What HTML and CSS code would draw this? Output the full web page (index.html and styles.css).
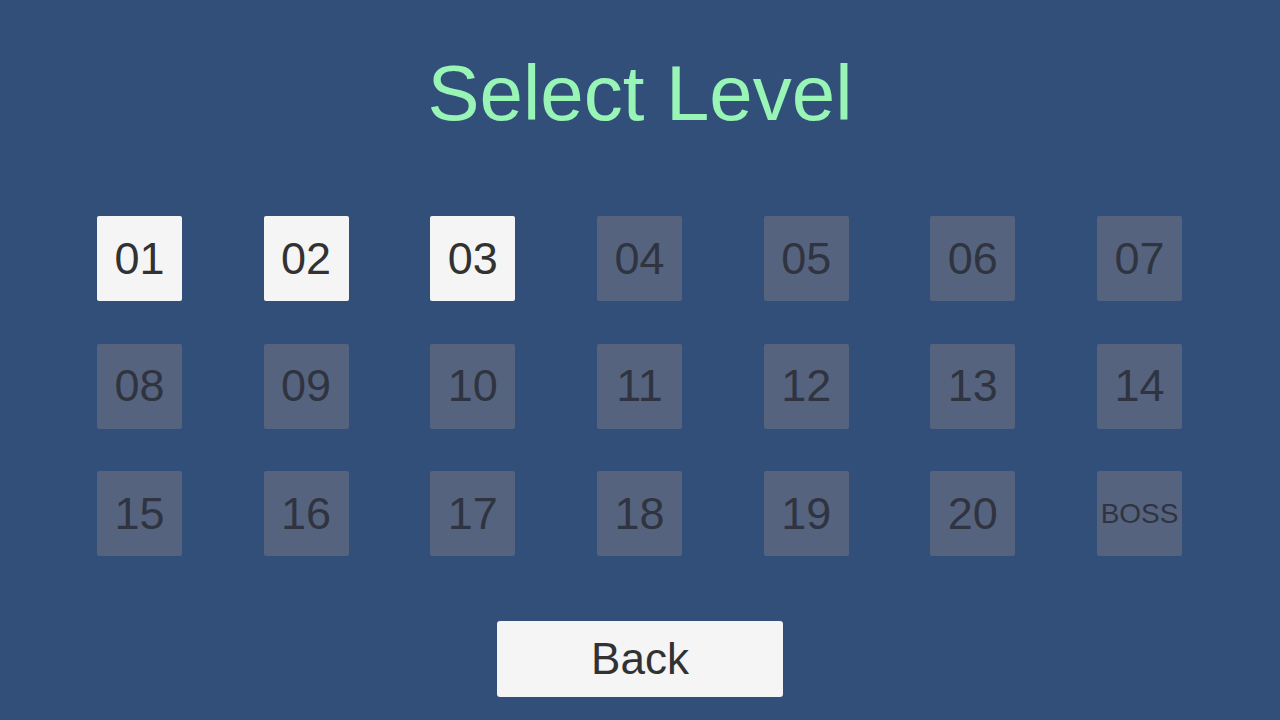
FILE: index.html
```html
<!DOCTYPE html>
<html>
<head>
<meta charset="utf-8">
<link rel="stylesheet" href="styles.css">
</head>
<body>
<main class="screen">
  <h1 class="title">Select Level</h1>
  <div class="grid">
    <div class="level open">01</div>
    <div class="level open">02</div>
    <div class="level open">03</div>
    <div class="level locked">04</div>
    <div class="level locked">05</div>
    <div class="level locked">06</div>
    <div class="level locked">07</div>
    <div class="level locked">08</div>
    <div class="level locked">09</div>
    <div class="level locked">10</div>
    <div class="level locked">11</div>
    <div class="level locked">12</div>
    <div class="level locked">13</div>
    <div class="level locked">14</div>
    <div class="level locked">15</div>
    <div class="level locked">16</div>
    <div class="level locked">17</div>
    <div class="level locked">18</div>
    <div class="level locked">19</div>
    <div class="level locked">20</div>
    <div class="level locked boss">BOSS</div>
  </div>
  <div class="back">Back</div>
</main>
</body>
</html>
```
FILE: styles.css
```css
html, body {
  margin: 0;
  padding: 0;
  background: #324f7a;
}
.screen {
  width: 1280px;
  height: 720px;
  display: flex;
  flex-direction: column;
  align-items: center;
  font-family: "Liberation Sans", Arial, sans-serif;
  padding-top: 54px;
  box-sizing: border-box;
}
.title {
  margin: 0;
  font-weight: normal;
  font-size: 78px;
  line-height: 78px;
  height: 78px;
  color: #98f5b6;
}
.grid {
  margin-top: 84px;
  display: grid;
  grid-template-columns: repeat(7, 85px);
  grid-auto-rows: 85px;
  column-gap: 81.7px;
  row-gap: 42.5px;
  margin-right: 1px;
}
.level {
  display: flex;
  align-items: center;
  justify-content: center;
  font-size: 45px;
  color: #323232;
  border-radius: 2px;
}
.open {
  background: #f5f5f5;
}
.locked {
  background: #56637e;
  color: #2f3440;
}
.boss {
  font-size: 28px;
}
.back {
  margin-top: 65px;
  width: 286px;
  height: 76px;
  background: #f5f5f5;
  border-radius: 3px;
  display: flex;
  align-items: center;
  justify-content: center;
  font-size: 44px;
  color: #323232;
}
```
